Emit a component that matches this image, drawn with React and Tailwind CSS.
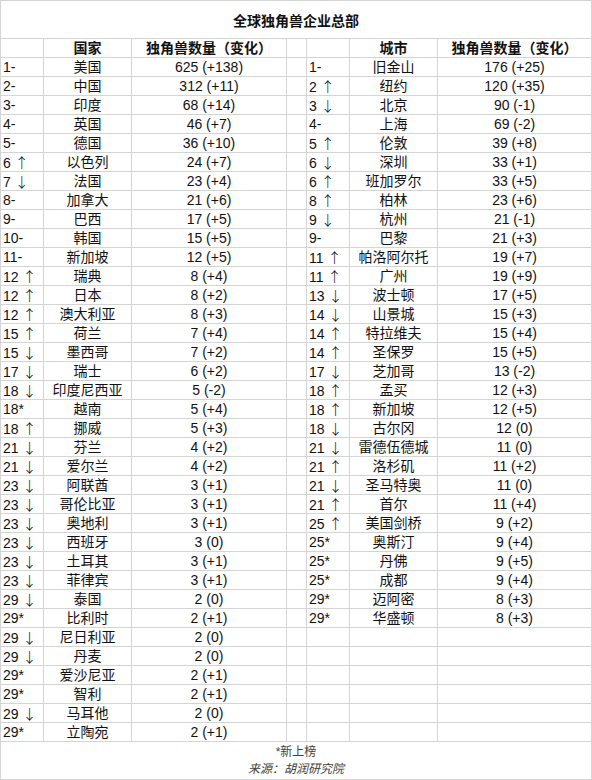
import { Fragment } from 'react'

const countries = [
  ['1-', '美国', '625 (+138)'],
  ['2-', '中国', '312 (+11)'],
  ['3-', '印度', '68 (+14)'],
  ['4-', '英国', '46 (+7)'],
  ['5-', '德国', '36 (+10)'],
  ['6↑', '以色列', '24 (+7)'],
  ['7↓', '法国', '23 (+4)'],
  ['8-', '加拿大', '21 (+6)'],
  ['9-', '巴西', '17 (+5)'],
  ['10-', '韩国', '15 (+5)'],
  ['11-', '新加坡', '12 (+5)'],
  ['12↑', '瑞典', '8 (+4)'],
  ['12↑', '日本', '8 (+2)'],
  ['12↑', '澳大利亚', '8 (+3)'],
  ['15↑', '荷兰', '7 (+4)'],
  ['15↓', '墨西哥', '7 (+2)'],
  ['17↓', '瑞士', '6 (+2)'],
  ['18↓', '印度尼西亚', '5 (-2)'],
  ['18*', '越南', '5 (+4)'],
  ['18↑', '挪威', '5 (+3)'],
  ['21↓', '芬兰', '4 (+2)'],
  ['21↓', '爱尔兰', '4 (+2)'],
  ['23↓', '阿联酋', '3 (+1)'],
  ['23↓', '哥伦比亚', '3 (+1)'],
  ['23↓', '奥地利', '3 (+1)'],
  ['23↓', '西班牙', '3 (0)'],
  ['23↓', '土耳其', '3 (+1)'],
  ['23↓', '菲律宾', '3 (+1)'],
  ['29↓', '泰国', '2 (0)'],
  ['29*', '比利时', '2 (+1)'],
  ['29↓', '尼日利亚', '2 (0)'],
  ['29↓', '丹麦', '2 (0)'],
  ['29*', '爱沙尼亚', '2 (+1)'],
  ['29*', '智利', '2 (+1)'],
  ['29↓', '马耳他', '2 (0)'],
  ['29*', '立陶宛', '2 (+1)'],
]

const cities = [
  ['1-', '旧金山', '176 (+25)'],
  ['2↑', '纽约', '120 (+35)'],
  ['3↓', '北京', '90 (-1)'],
  ['4-', '上海', '69 (-2)'],
  ['5↑', '伦敦', '39 (+8)'],
  ['6↓', '深圳', '33 (+1)'],
  ['6↑', '班加罗尔', '33 (+5)'],
  ['8↑', '柏林', '23 (+6)'],
  ['9↓', '杭州', '21 (-1)'],
  ['9-', '巴黎', '21 (+3)'],
  ['11↑', '帕洛阿尔托', '19 (+7)'],
  ['11↑', '广州', '19 (+9)'],
  ['13↓', '波士顿', '17 (+5)'],
  ['14↓', '山景城', '15 (+3)'],
  ['14↑', '特拉维夫', '15 (+4)'],
  ['14↑', '圣保罗', '15 (+5)'],
  ['17↓', '芝加哥', '13 (-2)'],
  ['18↑', '孟买', '12 (+3)'],
  ['18↑', '新加坡', '12 (+5)'],
  ['18↓', '古尔冈', '12 (0)'],
  ['21↓', '雷德伍德城', '11 (0)'],
  ['21↑', '洛杉矶', '11 (+2)'],
  ['21↓', '圣马特奥', '11 (0)'],
  ['21↑', '首尔', '11 (+4)'],
  ['25↑', '美国剑桥', '9 (+2)'],
  ['25*', '奥斯汀', '9 (+4)'],
  ['25*', '丹佛', '9 (+5)'],
  ['25*', '成都', '9 (+4)'],
  ['29*', '迈阿密', '8 (+3)'],
  ['29*', '华盛顿', '8 (+3)'],
]

const cell = 'bg-white h-[18px] leading-[18px] whitespace-nowrap overflow-hidden'

function Rank({ value }) {
  const num = value.slice(0, -1)
  const mark = value.slice(-1)
  if (mark === '↑' || mark === '↓') {
    return (
      <>
        {num}
        <span className="ml-[4px] font-['Noto_Sans_CJK_SC',sans-serif] font-light">{mark}</span>
      </>
    )
  }
  return value
}

function Cells({ row }) {
  if (!row) {
    return (
      <>
        <div className={cell} />
        <div className={cell} />
        <div className={cell} />
      </>
    )
  }
  return (
    <>
      <div className={`${cell} pl-[2px]`}>
        <Rank value={row[0]} />
      </div>
      <div className={`${cell} text-center`}>{row[1]}</div>
      <div className={`${cell} text-center`}>{row[2]}</div>
    </>
  )
}

export default function App() {
  return (
    <div className="w-[592px] h-[780px] bg-[#d4d4d4] p-px flex flex-col gap-px font-['Liberation_Sans','Noto_Sans_CJK_SC',sans-serif] text-[14px] text-[#111]">
      {/* Title */}
      <div className="bg-white h-[37px] flex items-center justify-center pt-[4px] font-bold">
        全球独角兽企业总部
      </div>

      {/* Table */}
      <div className="grid grid-cols-[42px_87px_154px_19px_42px_87px_153px] gap-px">
        <div className={cell} />
        <div className={`${cell} text-center font-bold`}>国家</div>
        <div className={`${cell} text-center font-bold`}>独角兽数量（变化）</div>
        <div className={cell} />
        <div className={cell} />
        <div className={`${cell} text-center font-bold`}>城市</div>
        <div className={`${cell} text-center font-bold`}>独角兽数量（变化）</div>

        {countries.map((c, i) => (
          <Fragment key={i}>
            <Cells row={c} />
            <div className={cell} />
            <Cells row={cities[i]} />
          </Fragment>
        ))}
      </div>

      {/* Footer */}
      <div className="bg-white h-[37px] flex flex-col items-center justify-center text-[12px] leading-[17px] text-[#404040]">
        <div>*新上榜</div>
        <div className="italic">来源：胡润研究院</div>
      </div>
    </div>
  )
}
